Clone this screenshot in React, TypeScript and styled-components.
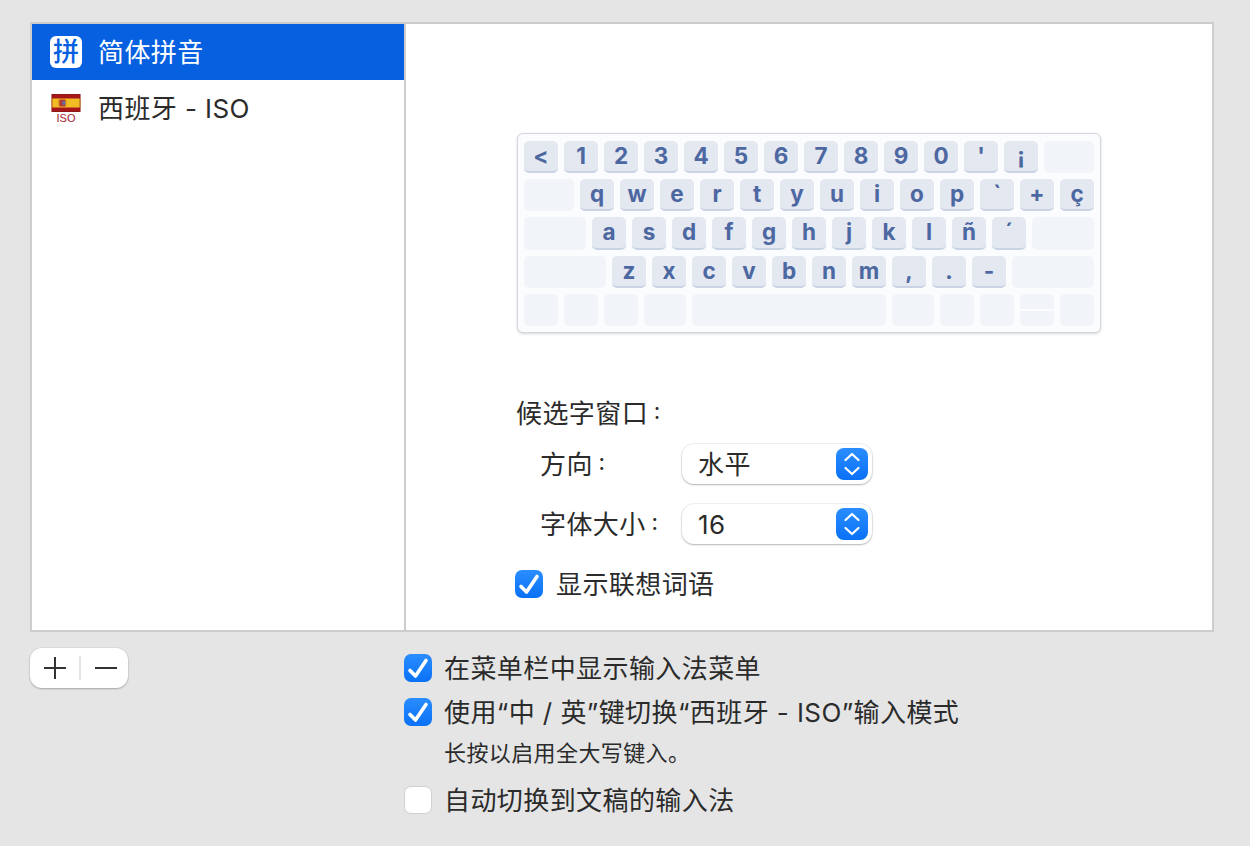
import React from 'react'
import styled, { createGlobalStyle } from 'styled-components'

const GlobalStyle = createGlobalStyle`
  html, body {
    margin: 0;
    padding: 0;
    background: #e5e5e5;
  }
  body {
    font-family: Inter, "Noto Sans CJK SC", sans-serif;
    color: #2b2b2b;
  }
`

const Page = styled.div`
  width: 1250px;
  height: 846px;
  padding: 22px 36px 0 30px;
  box-sizing: border-box;
  overflow: hidden;
`

const Panel = styled.div`
  display: flex;
  height: 610px;
  border: 2px solid #cdcdcd;
  box-sizing: border-box;
  background: #fff;
`

const SourceList = styled.div`
  width: 372px;
  border-right: 2px solid #cdcdcd;
`

const SourceRow = styled.div<{ $selected?: boolean }>`
  display: flex;
  align-items: center;
  gap: 16px;
  height: 56px;
  padding-left: 18px;
  font-size: 26px;
  background: ${p => (p.$selected ? '#0760e0' : 'transparent')};
  color: ${p => (p.$selected ? '#fff' : '#2b2b2b')};
`

const Caption = styled.span`
  display: block;
  padding-top: 2px;
  font-size: 26px;
  line-height: 36px;
  letter-spacing: 0.42px;
`

const PinyinIcon = styled.span`
  display: flex;
  align-items: center;
  justify-content: center;
  width: 32px;
  height: 32px;
  box-sizing: border-box;
  border-radius: 6px;
  background: #fff;
  color: #0760e0;
  font-size: 26px;
  font-weight: 500;
  line-height: 30px;
`

const FlagIcon = styled.span`
  display: flex;
  flex-direction: column;
  align-items: center;
  width: 32px;
  height: 32px;
  padding-top: 2px;
  box-sizing: border-box;
`

const FlagLabel = styled.span`
  margin-top: 1px;
  font-family: "Liberation Sans", sans-serif;
  font-size: 11px;
  line-height: 11px;
  color: #a8242e;
`

const Detail = styled.div`
  flex: 1;
  padding: 109px 0 0 110px;
`

const Keyboard = styled.div`
  display: flex;
  flex-direction: column;
  gap: 6px;
  width: 584px;
  height: 200px;
  margin-left: 1px;
  padding: 7px 6px 0;
  box-sizing: border-box;
  border: 1px solid #d4d7dd;
  border-radius: 6px;
  background: #fbfcfe;
  box-shadow: 0 1px 3px rgba(0, 0, 0, 0.16);
`

const KeyRow = styled.div<{ $tall?: boolean }>`
  display: flex;
  gap: 6px;
  height: ${p => (p.$tall ? 33 : 32)}px;
`

const Key = styled.div`
  width: 34px;
  box-sizing: border-box;
  border-radius: 5px;
  border-bottom: 2px solid #c9d3e4;
  background: #e3e8f1;
  color: #4d67a1;
  font-family: Inter, sans-serif;
  font-size: 22.5px;
  font-weight: 700;
  line-height: 30px;
  text-align: center;
`

const BlankKey = styled.div<{ $w: number }>`
  width: ${p => p.$w}px;
  border-radius: 5px;
  background: #f1f4f9;
`

const ArrowKeys = styled.div`
  display: flex;
  flex-direction: column;
  gap: 2px;
  width: 34px;
`

const ArrowHalf = styled.div<{ $top?: boolean }>`
  flex: 1;
  background: #f1f4f9;
  border-radius: ${p => (p.$top ? '5px 5px 0 0' : '0 0 5px 5px')};
`

const SectionTitle = styled.div`
  display: flex;
  align-items: center;
  height: 40px;
  margin-top: 60px;
`

/* smaller cell: the reference colon sits closer to the text than a full em */
const Colon = styled.span`
  font-family: "Noto Sans CJK TC", sans-serif;
  font-size: 18px;
  font-weight: 500;
  line-height: 1;
  vertical-align: 3px;
`

const FormRow = styled.div<{ $first?: boolean }>`
  display: flex;
  align-items: center;
  margin-top: ${p => (p.$first ? 11 : 20)}px;
  padding-left: 24px;
`

const FormLabel = styled.span`
  width: 142px;
`

const Select = styled.div`
  display: flex;
  align-items: center;
  justify-content: space-between;
  width: 190px;
  height: 40px;
  padding: 0 4px 0 16px;
  box-sizing: border-box;
  border-radius: 12px;
  background: #fff;
  box-shadow: 0 0 0 1px rgba(0, 0, 0, 0.05), 0 1px 2px rgba(0, 0, 0, 0.25);
`

const Stepper = styled.span`
  display: flex;
  width: 32px;
  height: 32px;
  border-radius: 8px;
  background: linear-gradient(#2a8dff, #0a71f6);
`

const CheckRow = styled.label<{ $mt?: number }>`
  display: flex;
  align-items: center;
  gap: 12px;
  height: 28px;
  margin-top: ${p => p.$mt ?? 0}px;
`

const DetailCheck = styled(CheckRow)`
  margin-left: -1px;
  margin-top: 26px;
  gap: 13px;
`

const Box = styled.span<{ $on?: boolean }>`
  display: flex;
  flex: none;
  width: 28px;
  height: 28px;
  box-sizing: border-box;
  border-radius: 7px;
  background: ${p => (p.$on ? 'linear-gradient(#2a8dff, #0a71f6)' : '#fff')};
  border: ${p => (p.$on ? 'none' : '1px solid #cfcfcf')};
`

const Footer = styled.div`
  display: flex;
  align-items: flex-start;
`

const AddRemove = styled.div`
  display: flex;
  align-items: center;
  width: 98px;
  height: 40px;
  margin-top: 16px;
  margin-right: 276px;
  padding-left: 14px;
  box-sizing: border-box;
  border-radius: 12px;
  background: #fff;
  box-shadow: 0 0 0 1px rgba(0, 0, 0, 0.03), 0 1px 2px rgba(0, 0, 0, 0.25);
`

const Divider = styled.span`
  width: 2px;
  height: 24px;
  margin: 0 14px 0 13px;
  background: #e4e4e4;
`

const Options = styled.div`
  display: flex;
  flex-direction: column;
  padding-top: 22px;
`

const Hint = styled.div`
  margin: 13px 0 19px 40px;
  font-size: 22px;
  line-height: 28px;
  letter-spacing: 0.4px;
`

const Tick = () => (
  <svg width="28" height="28" viewBox="0 0 28 28" fill="none">
    <polyline points="6,16.5 11.5,22 22,6.5" stroke="#fff" strokeWidth="3.6" strokeLinecap="round" strokeLinejoin="round" />
  </svg>
)

const UpDown = () => (
  <svg width="32" height="32" viewBox="0 0 32 32" fill="none" stroke="#fff" strokeWidth="2.2" strokeLinecap="round" strokeLinejoin="round">
    <polyline points="9.5,12 16,6 22.5,12" />
    <polyline points="9.5,20 16,26 22.5,20" />
  </svg>
)

const Flag = () => (
  <svg width="32" height="20" viewBox="0 0 32 20">
    <rect width="32" height="20" fill="#a6161b" />
    <rect y="5" width="32" height="10" fill="#f2bd24" />
    <rect x="8.5" y="6" width="7" height="8" rx="1" fill="#b5392c" />
    <rect x="12" y="8" width="3" height="4" fill="#5a6fb0" />
    <rect x="7.5" y="7" width="1" height="6" fill="#c9872a" />
    <rect x="15.5" y="7" width="1" height="6" fill="#c9872a" />
    <rect x="0.5" y="0.5" width="31" height="19" fill="none" stroke="#7c1a14" strokeOpacity="0.6" />
  </svg>
)

const Plus = () => (
  <svg width="22" height="22" viewBox="0 0 22 22" fill="none" stroke="#333" strokeWidth="2">
    <path d="M0 11h22M11 0v22" />
  </svg>
)

const Minus = () => (
  <svg width="22" height="22" viewBox="0 0 22 22" fill="none" stroke="#333" strokeWidth="2">
    <path d="M0 11h22" />
  </svg>
)

const row1 = ['<', '1', '2', '3', '4', '5', '6', '7', '8', '9', '0', "'", '¡']
const row2 = ['q', 'w', 'e', 'r', 't', 'y', 'u', 'i', 'o', 'p', '`', '+', 'ç']
const row3 = ['a', 's', 'd', 'f', 'g', 'h', 'j', 'k', 'l', 'ñ', '´']
const row4 = ['z', 'x', 'c', 'v', 'b', 'n', 'm', ',', '.', '-']

const keys = (list: string[]) => list.map(k => <Key key={k}>{k}</Key>)

export default function App() {
  return (
    <Page>
      <GlobalStyle />
      <Panel>
        <SourceList>
          <SourceRow $selected>
            <PinyinIcon>拼</PinyinIcon>
            <Caption>简体拼音</Caption>
          </SourceRow>
          <SourceRow>
            <FlagIcon>
              <Flag />
              <FlagLabel>ISO</FlagLabel>
            </FlagIcon>
            <Caption>西班牙 - ISO</Caption>
          </SourceRow>
        </SourceList>
        <Detail>
          <Keyboard>
            <KeyRow>
              {keys(row1)}
              <BlankKey $w={50} />
            </KeyRow>
            <KeyRow>
              <BlankKey $w={50} />
              {keys(row2)}
            </KeyRow>
            <KeyRow $tall>
              <BlankKey $w={62} />
              {keys(row3)}
              <BlankKey $w={62} />
            </KeyRow>
            <KeyRow>
              <BlankKey $w={82} />
              {keys(row4)}
              <BlankKey $w={82} />
            </KeyRow>
            <KeyRow>
              <BlankKey $w={34} />
              <BlankKey $w={34} />
              <BlankKey $w={34} />
              <BlankKey $w={42} />
              <BlankKey $w={194} />
              <BlankKey $w={42} />
              <BlankKey $w={34} />
              <BlankKey $w={34} />
              <ArrowKeys>
                <ArrowHalf $top />
                <ArrowHalf />
              </ArrowKeys>
              <BlankKey $w={34} />
            </KeyRow>
          </Keyboard>
          <SectionTitle>
            <Caption>候选字窗口<Colon>：</Colon></Caption>
          </SectionTitle>
          <FormRow $first>
            <FormLabel>
              <Caption>方向<Colon>：</Colon></Caption>
            </FormLabel>
            <Select>
              <Caption>水平</Caption>
              <Stepper><UpDown /></Stepper>
            </Select>
          </FormRow>
          <FormRow>
            <FormLabel>
              <Caption>字体大小<Colon>：</Colon></Caption>
            </FormLabel>
            <Select>
              <Caption>16</Caption>
              <Stepper><UpDown /></Stepper>
            </Select>
          </FormRow>
          <DetailCheck>
            <Box $on><Tick /></Box>
            <Caption>显示联想词语</Caption>
          </DetailCheck>
        </Detail>
      </Panel>
      <Footer>
        <AddRemove>
          <Plus />
          <Divider />
          <Minus />
        </AddRemove>
        <Options>
          <CheckRow>
            <Box $on><Tick /></Box>
            <Caption>在菜单栏中显示输入法菜单</Caption>
          </CheckRow>
          <CheckRow $mt={16}>
            <Box $on><Tick /></Box>
            <Caption>使用“中 / 英”键切换“西班牙 - ISO”输入模式</Caption>
          </CheckRow>
          <Hint>长按以启用全大写键入。</Hint>
          <CheckRow>
            <Box />
            <Caption>自动切换到文稿的输入法</Caption>
          </CheckRow>
        </Options>
      </Footer>
    </Page>
  )
}
